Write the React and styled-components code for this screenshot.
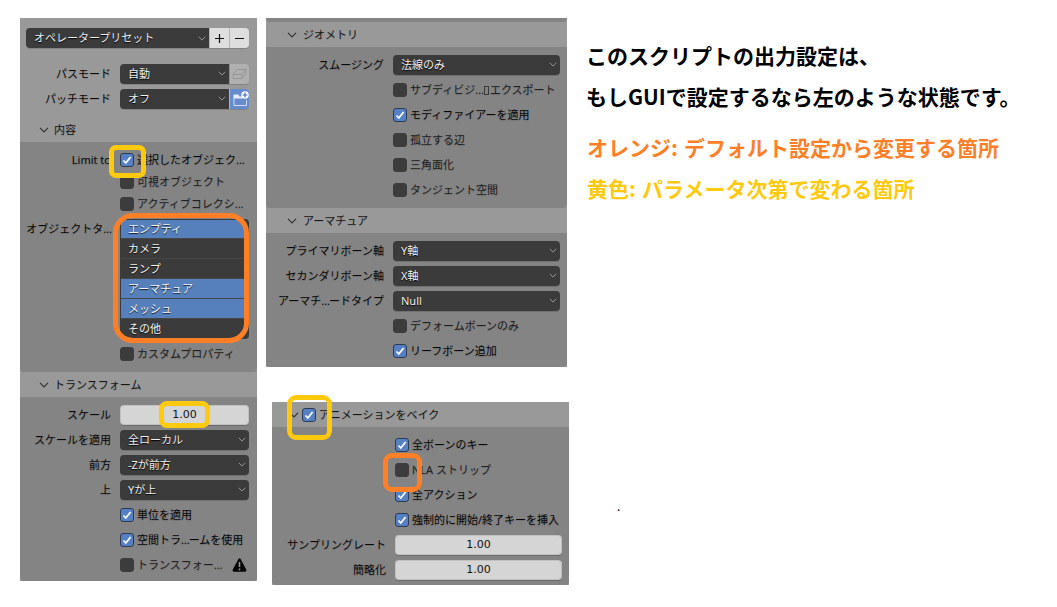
import React from "react";
import styled, { createGlobalStyle, css } from "styled-components";

const Global = createGlobalStyle`
  * { box-sizing: border-box; }
  body { margin: 0; background: #fff; overflow: hidden; }
`;

const uiFont = css`
  font-family: "Noto Sans", "Noto Sans CJK JP", sans-serif;
  font-size: 11px;
  line-height: 16px;
  white-space: nowrap;
`;

const Page = styled.main`
  position: relative;
  width: 1057px;
  height: 607px;
  padding: 18px 0 0 20px;
  display: flex;
  align-items: flex-start;
  ${uiFont}
  color: #060606;
`;

const Column = styled.div`
  width: 303px;
  margin-left: 9px;
  display: flex;
  flex-direction: column;
`;

const Panel = styled.section`
  width: ${(p) => p.$w}px;
  height: ${(p) => p.$h}px;
  margin: ${(p) => p.$m || 0};
  background: #999;
  overflow: hidden;
  display: flex;
  flex-direction: column;
  flex: none;
`;

const Top = styled.div`
  height: 99px;
  padding: 10px 8px 0 6px;
  flex: none;
`;

const Header = styled.header`
  height: 25px;
  flex: none;
  display: flex;
  align-items: center;
  padding-left: ${(p) => p.$pad || 19}px;
  gap: ${(p) => p.$gap || 6}px;
  color: #161616;
  text-shadow: 0 1px 1px rgba(0, 0, 0, 0.12);
`;

const Body = styled.div`
  height: ${(p) => p.$h}px;
  flex: none;
  padding: ${(p) => p.$top}px ${(p) => p.$right || 8}px 0 0;
  background: #848484;
  border-radius: 0 0 4px 4px;
`;

const Row = styled.div`
  height: ${(p) => p.$h || 25}px;
  display: grid;
  grid-template-columns: ${(p) => p.$label}px minmax(0, 1fr);
  column-gap: 9px;
  align-items: center;
`;

const Label = styled.span`
  justify-self: end;
  color: #080808;
  text-shadow: 0 1px 1px rgba(0, 0, 0, 0.15);
`;

const Control = styled.div`
  display: flex;
  height: 20px;
  border-radius: 4px;
  overflow: hidden;
  box-shadow: 0 1px 0 rgba(0, 0, 0, 0.14);
`;

const Dropdown = styled.div`
  flex: 1;
  min-width: 0;
  background: #3b3b3b;
  color: #f0f0f0;
  display: flex;
  align-items: center;
  justify-content: space-between;
  padding: 0 ${(p) => p.$end || 3}px 0 8px;
  text-shadow: 0 1px 1px #000;
`;

const IconButton = styled.button`
  width: 20px;
  height: 20px;
  padding: 0;
  border: 0;
  border-left: 1px solid ${(p) => (p.$dim ? "#8f8f8f" : "#b5b5b5")};
  background: ${(p) => (p.$active ? "#668cce" : p.$dim ? "#b0b0b0" : "#dedede")};
  display: flex;
  align-items: center;
  justify-content: center;
`;

const NumberField = styled.div`
  height: 20px;
  border-radius: 4px;
  background: #d5d5d5;
  box-shadow: 0 1px 0 rgba(0, 0, 0, 0.18), inset 0 0 0 1px rgba(120, 120, 120, 0.22);
  display: flex;
  align-items: center;
  justify-content: center;
  font-family: "DejaVu Sans", sans-serif;
  color: #111;
`;

const CheckLine = styled.div`
  display: flex;
  align-items: center;
  gap: 3px;
  color: ${(p) => (p.$on ? "#060606" : "#202020")};
  text-shadow: 0 1px 1px rgba(0, 0, 0, 0.15);
`;

const Box = styled.span`
  width: 14px;
  height: 14px;
  flex: none;
  border-radius: 3px;
  border: 1px solid ${(p) => (p.$on ? "#2e3a52" : "#3c3c3c")};
  background: ${(p) => (p.$on ? "#5680c4" : "#3c3c3c")};
  display: flex;
  align-items: center;
  justify-content: center;
`;

const Ellipsis = styled.span`
  letter-spacing: -1px;
`;

const MissingGlyph = styled.span`
  display: inline-block;
  width: 5px;
  height: 9px;
  margin: 0 1px;
  border: 1px solid #3a3a3a;
  vertical-align: -1px;
`;

const WarnIcon = styled.svg`
  margin-left: 8px;
`;

const TypeList = styled.div`
  height: 120px;
  padding: 1px 5px 0 1px;
  border-radius: 4px;
  background: #3b3b3b;
`;

const TypeItem = styled.div`
  height: ${(p) => (p.$first ? 19 : 20)}px;
  padding-left: 7px;
  display: flex;
  align-items: center;
  border-bottom: 1px solid #474747;
  background: ${(p) => (p.$on ? "#5680bc" : "#3b3b3b")};
  color: #f4f4f4;
  text-shadow: 0 1px 1px rgba(0, 0, 0, 0.8);
`;

const TypeRow = styled.div`
  display: grid;
  grid-template-columns: 91px minmax(0, 1fr);
  column-gap: 9px;
  height: 124px;
  padding-top: 4px;
  align-items: start;

  & > ${Label} { margin-top: 2px; }
`;

const Notes = styled.div`
  margin: 17px 0 0 17px;
  font-family: "Noto Sans CJK JP", sans-serif;
  font-weight: 700;
  font-size: 21px;
  line-height: 41px;
`;

const Note = styled.p`
  margin: ${(p) => p.$m || 0};
  color: ${(p) => p.$color || "#000"};
  word-spacing: 1.5px;
`;

const Dot = styled.span`
  display: block;
  margin: 289px 0 0 31px;
  font-weight: 400;
  font-size: 12px;
  line-height: 16px;
  color: #000;
`;

const Mark = styled.div`
  position: absolute;
  left: ${(p) => p.$x}px;
  top: ${(p) => p.$y}px;
  width: ${(p) => p.$w}px;
  height: ${(p) => p.$h}px;
  border: 5px solid ${(p) => p.$color};
  border-radius: ${(p) => p.$r}px;
`;

const ORANGE = "#ff7f27";
const YELLOW = "#ffc90e";

const Chevron = ({ dark }) => (
  <svg width={dark ? 10 : 8} height={dark ? 6 : 5} viewBox="0 0 10 6" fill="none">
    <path d="M1 .8 5 5 9 .8" stroke={dark ? "#303030" : "#a0a0a0"} strokeWidth="1.1" />
  </svg>
);

const Checkbox = ({ on }) => (
  <Box $on={on}>
    {on && (
      <svg width="12" height="12" viewBox="0 0 12 12" fill="none">
        <path d="M2.5 6.5 4.8 9 9.6 3" stroke="#fff" strokeWidth="1.7" />
      </svg>
    )}
  </Box>
);

const Shortened = ({ start, end }) => (
  <span>{start}<Ellipsis>…</Ellipsis>{end}</span>
);

const Select = ({ value, children, end }) => (
  <Control>
    <Dropdown $end={end}>
      <span>{value}</span>
      <Chevron />
    </Dropdown>
    {children}
  </Control>
);

const Field = ({ label, labelWidth, children, h }) => (
  <Row $label={labelWidth} $h={h}>
    <Label>{label}</Label>
    {children}
  </Row>
);

const CheckRow = ({ label = "", labelWidth, on, text, h, extra }) => (
  <Field label={label} labelWidth={labelWidth} h={h}>
    <CheckLine $on={on}>
      <Checkbox on={on} />
      <span>{text}</span>
      {extra}
    </CheckLine>
  </Field>
);

const PresetRow = styled.div`
  margin-bottom: 13px;
`;

const PathRows = styled.div`
  margin-left: -6px;
`;

const types = [
  ["エンプティ", true],
  ["カメラ", false],
  ["ランプ", false],
  ["アーマチュア", true],
  ["メッシュ", true],
  ["その他", false],
];

const Warning = () => (
  <WarnIcon width="15" height="14" viewBox="0 0 15 14">
    <path d="M6.3 1.2Q7.5-.5 8.7 1.2L14.2 11.5Q14.8 13.7 13 13.8H2Q.2 13.7.8 11.5Z" fill="#050505" />
    <path d="M7.5 4v5M7.5 10.4v1.8" stroke="#959595" strokeWidth="1.6" />
  </WarnIcon>
);

const ExportPanel = () => (
  <Panel $w={237} $h={563}>
    <Top>
      <PresetRow>
        <Select value="オペレータープリセット" end={3}>
          <IconButton>
            <svg width="11" height="11" viewBox="0 0 11 11">
              <path d="M5.5 1v9M1 5.5h9" stroke="#111" strokeWidth="1.2" />
            </svg>
          </IconButton>
          <IconButton>
            <svg width="11" height="11" viewBox="0 0 11 11">
              <path d="M1 5.5h9" stroke="#111" strokeWidth="1.2" />
            </svg>
          </IconButton>
        </Select>
      </PresetRow>
      <PathRows>
        <Field label="パスモード" labelWidth={91}>
          <Select value="自動" end={3}>
            <IconButton $dim>
              <svg width="15" height="12" viewBox="0 0 15 12" fill="none" stroke="#969696">
                <path d="M1 6.5 5 1.5h9v4l-4 5H1zM1 6.5h9v4M10 6.5l4-5" />
              </svg>
            </IconButton>
          </Select>
        </Field>
        <Field label="パッチモード" labelWidth={91}>
          <Select value="オフ" end={3}>
            <IconButton $active>
              <svg width="18" height="18" viewBox="0 0 18 18" fill="none">
                <path d="M3 7.5V15.5H15.5V10" stroke="#d3ddf0" />
                <path d="M2.5 4.5h5l1 2h3v2h-9z" fill="#e6ecf7" />
                <circle cx="14" cy="5" r="3.8" fill="#fff" />
                <path d="M14 2.5v5M11.5 5h5" stroke="#446bad" strokeWidth="1.2" />
              </svg>
            </IconButton>
          </Select>
        </Field>
      </PathRows>
    </Top>
    <Header $gap={5}><Chevron dark />内容</Header>
    <Body $h={230} $top={7}>
      <CheckRow label="Limit to" labelWidth={91} on h={22} text={<Shortened start="選択したオブジェク" />} />
      <CheckRow labelWidth={91} h={22} text="可視オブジェクト" />
      <CheckRow labelWidth={91} h={22} text={<Shortened start="アクティブコレクシ" />} />
      <TypeRow>
        <Label><Shortened start="オブジェクトタ" /></Label>
        <TypeList>
          {types.map(([name, on], i) => (
            <TypeItem key={name} $on={on} $first={i === 0}>{name}</TypeItem>
          ))}
        </TypeList>
      </TypeRow>
      <CheckRow labelWidth={91} h={30} text="カスタムプロパティ" />
    </Body>
    <Header $gap={5}><Chevron dark />トランスフォーム</Header>
    <Body $h={184} $top={5}>
      <Field label="スケール" labelWidth={91}><NumberField>1.00</NumberField></Field>
      <Field label="スケールを適用" labelWidth={91}><Select value="全ローカル" /></Field>
      <Field label="前方" labelWidth={91}><Select value="-Zが前方" /></Field>
      <Field label="上" labelWidth={91}><Select value="Yが上" /></Field>
      <CheckRow labelWidth={91} on text="単位を適用" />
      <CheckRow labelWidth={91} on text={<Shortened start="空間トラ" end="ームを使用" />} />
      <CheckRow labelWidth={91} text={<Shortened start="トランスフォー" />} extra={<Warning />} />
    </Body>
  </Panel>
);

const GeometryPanel = () => (
  <Panel $w={301} $h={349}>
    <Body $h={4} $top={0} />
    <Header $pad={21}><Chevron dark />ジオメトリ</Header>
    <Body $h={161} $top={5} $right={7}>
      <Field label="スムージング" labelWidth={118}><Select value="法線のみ" /></Field>
      <CheckRow labelWidth={118} text={<Shortened start="サブディビジ" end={<><MissingGlyph />エクスポート</>} />} />
      <CheckRow labelWidth={118} on text="モディファイアーを適用" />
      <CheckRow labelWidth={118} text="孤立する辺" />
      <CheckRow labelWidth={118} text="三角面化" />
      <CheckRow labelWidth={118} text="タンジェント空間" />
    </Body>
    <Header $pad={21}><Chevron dark />アーマチュア</Header>
    <Body $h={134} $top={5} $right={7}>
      <Field label="プライマリボーン軸" labelWidth={118}><Select value="Y軸" /></Field>
      <Field label="セカンダリボーン軸" labelWidth={118}><Select value="X軸" /></Field>
      <Field label={<Shortened start="アーマチ" end="ードタイプ" />} labelWidth={118}><Select value="Null" /></Field>
      <CheckRow labelWidth={118} text="デフォームボーンのみ" />
      <CheckRow labelWidth={118} on text="リーフボーン追加" />
    </Body>
  </Panel>
);

const AnimationPanel = () => (
  <Panel $w={297} $h={183} $m="35px 0 0 6px">
    <Header $pad={17} $gap={3}><Chevron dark /><Checkbox on />アニメーションをベイク</Header>
    <Body $h={158} $top={5} $right={7}>
      <CheckRow labelWidth={114} on text="全ボーンのキー" />
      <CheckRow labelWidth={114} text="NLA ストリップ" />
      <CheckRow labelWidth={114} on text="全アクション" />
      <CheckRow labelWidth={114} on text="強制的に開始/終了キーを挿入" />
      <Field label="サンプリングレート" labelWidth={114}><NumberField>1.00</NumberField></Field>
      <Field label="簡略化" labelWidth={114}><NumberField>1.00</NumberField></Field>
    </Body>
  </Panel>
);

export default function App() {
  return (
    <Page>
      <Global />
      <ExportPanel />
      <Column>
        <GeometryPanel />
        <AnimationPanel />
      </Column>
      <Notes>
        <Note>このスクリプトの出力設定は、</Note>
        <Note>もしGUIで設定するなら左のような状態です。</Note>
        <Note $m="10px 0 0 1px" $color={ORANGE}>オレンジ: デフォルト設定から変更する箇所</Note>
        <Note $m="0 0 0 1px" $color={YELLOW}>黄色: パラメータ次第で変わる箇所</Note>
        <Dot>.</Dot>
      </Notes>
      <Mark $x={109} $y={145} $w={37} $h={33} $r={7} $color={YELLOW} />
      <Mark $x={113} $y={213} $w={136} $h={130} $r={20} $color={ORANGE} />
      <Mark $x={159} $y={401} $w={51} $h={27} $r={8} $color={YELLOW} />
      <Mark $x={287} $y={395} $w={45} $h={45} $r={9} $color={YELLOW} />
      <Mark $x={383} $y={453} $w={39} $h={39} $r={9} $color={ORANGE} />
    </Page>
  );
}
